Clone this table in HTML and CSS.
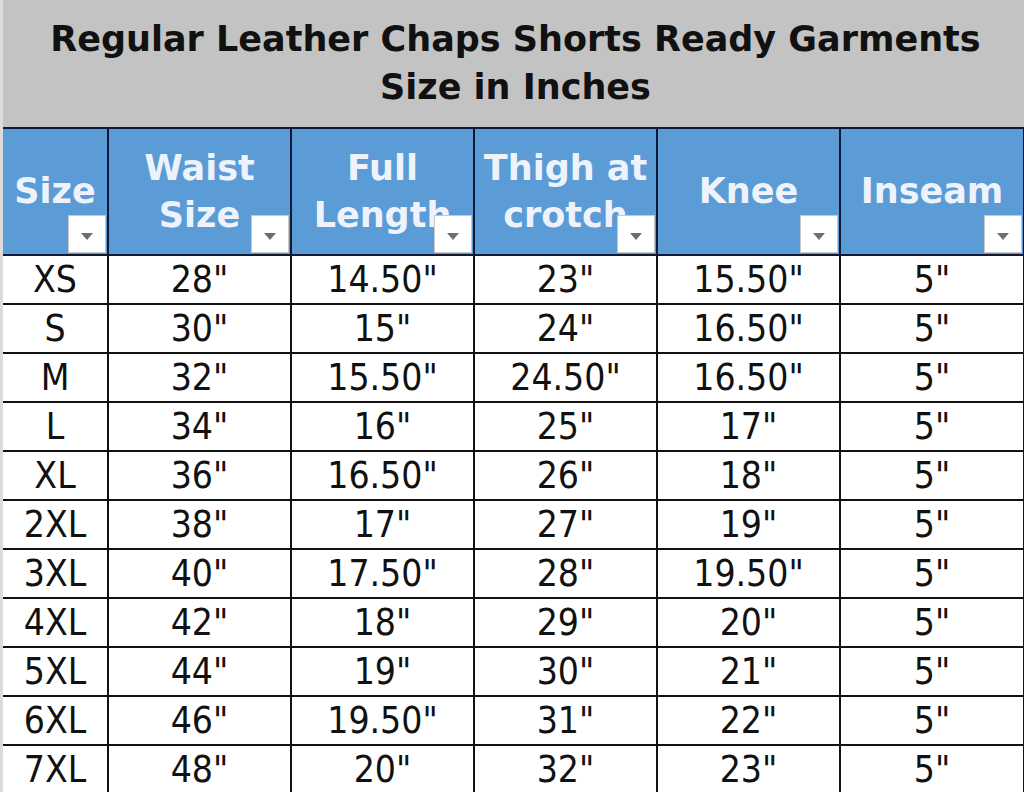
FILE: index.html
```html
<!DOCTYPE html>
<html>
<head>
<meta charset="utf-8">
<link rel="stylesheet" href="styles.css">
</head>
<body>
<div class="sheet">
  <div class="title">Regular Leather Chaps Shorts Ready Garments<br>Size in Inches</div>
  <table class="grid">
    <colgroup>
      <col class="c-size"><col class="c-w"><col class="c-w"><col class="c-w"><col class="c-w"><col class="c-last">
    </colgroup>
    <thead>
      <tr>
        <th><span class="lbl">Size</span><span class="dd"></span></th>
        <th><span class="lbl">Waist<br>Size</span><span class="dd"></span></th>
        <th><span class="lbl">Full<br>Length</span><span class="dd"></span></th>
        <th><span class="lbl">Thigh at<br>crotch</span><span class="dd"></span></th>
        <th><span class="lbl">Knee</span><span class="dd"></span></th>
        <th><span class="lbl">Inseam</span><span class="dd"></span></th>
      </tr>
    </thead>
    <tbody>
      <tr><td>XS</td><td>28"</td><td>14.50"</td><td>23"</td><td>15.50"</td><td>5"</td></tr>
      <tr><td>S</td><td>30"</td><td>15"</td><td>24"</td><td>16.50"</td><td>5"</td></tr>
      <tr><td>M</td><td>32"</td><td>15.50"</td><td>24.50"</td><td>16.50"</td><td>5"</td></tr>
      <tr><td>L</td><td>34"</td><td>16"</td><td>25"</td><td>17"</td><td>5"</td></tr>
      <tr><td>XL</td><td>36"</td><td>16.50"</td><td>26"</td><td>18"</td><td>5"</td></tr>
      <tr><td>2XL</td><td>38"</td><td>17"</td><td>27"</td><td>19"</td><td>5"</td></tr>
      <tr><td>3XL</td><td>40"</td><td>17.50"</td><td>28"</td><td>19.50"</td><td>5"</td></tr>
      <tr><td>4XL</td><td>42"</td><td>18"</td><td>29"</td><td>20"</td><td>5"</td></tr>
      <tr><td>5XL</td><td>44"</td><td>19"</td><td>30"</td><td>21"</td><td>5"</td></tr>
      <tr><td>6XL</td><td>46"</td><td>19.50"</td><td>31"</td><td>22"</td><td>5"</td></tr>
      <tr><td>7XL</td><td>48"</td><td>20"</td><td>32"</td><td>23"</td><td>5"</td></tr>
    </tbody>
  </table>
</div>
</body>
</html>
```
FILE: styles.css
```css
html, body {
  margin: 0;
  padding: 0;
  background: #ffffff;
}
.sheet {
  width: 1024px;
  height: 792px;
  overflow: hidden;
  font-family: "DejaVu Sans Condensed", "DejaVu Sans", sans-serif;
  border-left: 3px solid #dcdcdc;
  box-sizing: border-box;
}
.title {
  height: 127px;
  box-sizing: border-box;
  background: #c3c3c3;
  color: #111111;
  font-family: "DejaVu Sans", sans-serif;
  font-weight: bold;
  font-size: 35px;
  line-height: 48px;
  text-align: center;
  padding-top: 15px;
  padding-left: 4px;
  white-space: nowrap;
}
.grid {
  width: 1021px;
  border-collapse: collapse;
  table-layout: fixed;
}
.c-size { width: 105px; }
.c-w { width: 183px; }
.c-last { width: 184px; }
.grid th {
  position: relative;
  height: 125px;
  padding: 0;
  background: #5b9bd6;
  color: #eef3fb;
  font-family: "DejaVu Sans", sans-serif;
  font-weight: bold;
  font-size: 35px;
  line-height: 47px;
  border: 2px solid #0e1a3a;
  overflow: hidden;
  white-space: nowrap;
  vertical-align: middle;
}
.grid th:first-child { border-left: none; }
.lbl {
  display: block;
  text-align: center;
}
.dd {
  position: absolute;
  right: 1px;
  bottom: 1px;
  width: 36px;
  height: 36px;
  background: #ffffff;
  border: 1px solid #c8c8c8;
}
.dd::after {
  content: "";
  position: absolute;
  left: 12px;
  top: 17px;
  border-left: 6px solid transparent;
  border-right: 6px solid transparent;
  border-top: 7px solid #6e6e6e;
}
.grid td {
  height: 47px;
  padding: 0;
  text-align: center;
  font-size: 37px;
  line-height: 47px;
  color: #111111;
  border: 2px solid #111111;
  white-space: nowrap;
}
.grid td:first-child { border-left: none; }
.grid td:last-child, .grid th:last-child { border-right: 2px solid #111111; }
```
